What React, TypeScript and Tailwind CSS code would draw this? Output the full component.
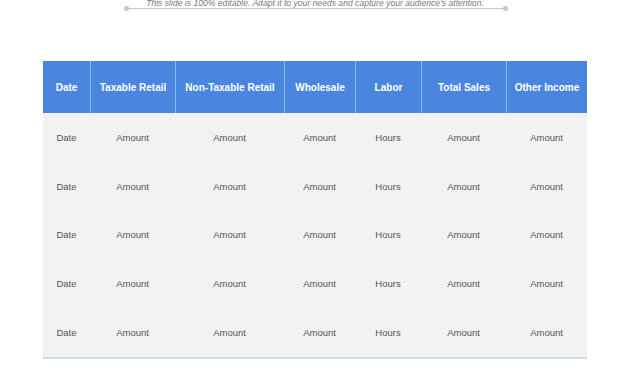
const columns = [
  { label: "Date", width: "w-[47px]", value: "Date" },
  { label: "Taxable Retail", width: "w-[85px]", value: "Amount" },
  { label: "Non-Taxable Retail", width: "w-[109px]", value: "Amount" },
  { label: "Wholesale", width: "w-[71px]", value: "Amount" },
  { label: "Labor", width: "w-[66px]", value: "Hours" },
  { label: "Total Sales", width: "w-[85px]", value: "Amount" },
  { label: "Other Income", width: "w-[81px]", value: "Amount" },
];

const rows = [0, 1, 2, 3, 4];

export default function App() {
  return (
    <div
      className="w-[630px] h-[380px] bg-white overflow-hidden"
      style={{ fontFamily: '"Liberation Sans", Arial, sans-serif' }}
    >
      {/* caption with rule */}
      <div className="relative h-[61px] pt-[6px] pl-[124px]">
        <div className="flex items-center w-[384px]">
          <div className="w-[5px] h-[5px] rounded-full bg-[#c4c4c4]" />
          <div className="flex-1 h-px bg-[#c8c8c8]" />
          <div className="w-[5px] h-[5px] rounded-full bg-[#c4c4c4]" />
        </div>
        <div className="absolute inset-x-0 top-[-2px] text-center text-[8.6px] italic text-[#7a7a7a] leading-[10px]">
          This slide is 100% editable. Adapt it to your needs and capture your audience's attention.
        </div>
      </div>

      <div className="ml-[43px] w-[544px]">
        <div className="flex h-[52px] bg-[#4a86e0]">
          {columns.map((c, i) => (
            <div
              key={c.label}
              className={`${c.width} flex items-center justify-center text-white font-bold text-[10px] ${
                i > 0 ? "border-l border-[#8fb4ee]" : ""
              }`}
            >
              {c.label}
            </div>
          ))}
        </div>
        <div className="bg-[#f2f2f2] pt-[1px]">
          {rows.map((r) => (
            <div key={r} className="flex h-[48.6px] items-center">
              {columns.map((c) => (
                <div
                  key={c.label}
                  className={`${c.width} text-center text-[9.5px] text-[#555555]`}
                >
                  {c.value}
                </div>
              ))}
            </div>
          ))}
        </div>
        <div className="h-[2px] bg-[#cadde0]" />
      </div>
    </div>
  );
}
